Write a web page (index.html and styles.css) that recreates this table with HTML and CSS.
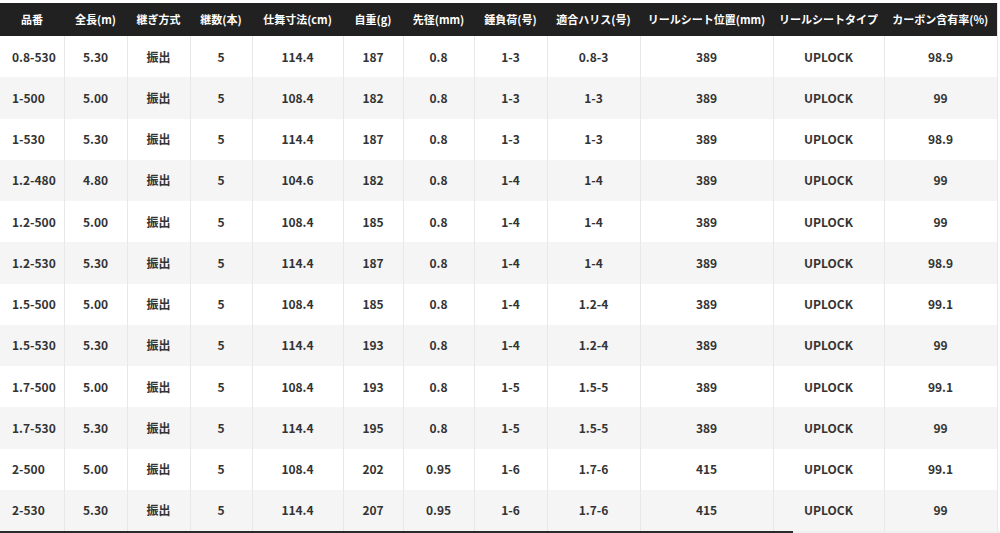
FILE: index.html
```html
<!DOCTYPE html>
<html lang="ja">
<head>
<meta charset="utf-8">
<link rel="stylesheet" href="styles.css">
</head>
<body>
<div class="scroller">
  <table class="spec">
    <colgroup>
      <col style="width:64px"><col style="width:63px"><col style="width:63px"><col style="width:62px">
      <col style="width:91px"><col style="width:60px"><col style="width:71px"><col style="width:73px">
      <col style="width:93px"><col style="width:133px"><col style="width:111px"><col style="width:113px">
      <col style="width:3px">
    </colgroup>
    <thead>
      <tr>
        <th>品番</th><th>全長(m)</th><th>継ぎ方式</th><th>継数(本)</th><th>仕舞寸法(cm)</th><th>自重(g)</th><th>先径(mm)</th><th>錘負荷(号)</th><th>適合ハリス(号)</th><th>リールシート位置(mm)</th><th>リールシートタイプ</th><th>カーボン含有率(%)</th><th class="edge"></th>
      </tr>
    </thead>
    <tbody>
      <tr><td class="l">0.8-530</td><td>5.30</td><td>振出</td><td>5</td><td>114.4</td><td>187</td><td>0.8</td><td>1-3</td><td>0.8-3</td><td>389</td><td>UPLOCK</td><td>98.9</td><td class="edge"></td></tr>
      <tr><td class="l">1-500</td><td>5.00</td><td>振出</td><td>5</td><td>108.4</td><td>182</td><td>0.8</td><td>1-3</td><td>1-3</td><td>389</td><td>UPLOCK</td><td>99</td><td class="edge"></td></tr>
      <tr><td class="l">1-530</td><td>5.30</td><td>振出</td><td>5</td><td>114.4</td><td>187</td><td>0.8</td><td>1-3</td><td>1-3</td><td>389</td><td>UPLOCK</td><td>98.9</td><td class="edge"></td></tr>
      <tr><td class="l">1.2-480</td><td>4.80</td><td>振出</td><td>5</td><td>104.6</td><td>182</td><td>0.8</td><td>1-4</td><td>1-4</td><td>389</td><td>UPLOCK</td><td>99</td><td class="edge"></td></tr>
      <tr><td class="l">1.2-500</td><td>5.00</td><td>振出</td><td>5</td><td>108.4</td><td>185</td><td>0.8</td><td>1-4</td><td>1-4</td><td>389</td><td>UPLOCK</td><td>99</td><td class="edge"></td></tr>
      <tr><td class="l">1.2-530</td><td>5.30</td><td>振出</td><td>5</td><td>114.4</td><td>187</td><td>0.8</td><td>1-4</td><td>1-4</td><td>389</td><td>UPLOCK</td><td>98.9</td><td class="edge"></td></tr>
      <tr><td class="l">1.5-500</td><td>5.00</td><td>振出</td><td>5</td><td>108.4</td><td>185</td><td>0.8</td><td>1-4</td><td>1.2-4</td><td>389</td><td>UPLOCK</td><td>99.1</td><td class="edge"></td></tr>
      <tr><td class="l">1.5-530</td><td>5.30</td><td>振出</td><td>5</td><td>114.4</td><td>193</td><td>0.8</td><td>1-4</td><td>1.2-4</td><td>389</td><td>UPLOCK</td><td>99</td><td class="edge"></td></tr>
      <tr><td class="l">1.7-500</td><td>5.00</td><td>振出</td><td>5</td><td>108.4</td><td>193</td><td>0.8</td><td>1-5</td><td>1.5-5</td><td>389</td><td>UPLOCK</td><td>99.1</td><td class="edge"></td></tr>
      <tr><td class="l">1.7-530</td><td>5.30</td><td>振出</td><td>5</td><td>114.4</td><td>195</td><td>0.8</td><td>1-5</td><td>1.5-5</td><td>389</td><td>UPLOCK</td><td>99</td><td class="edge"></td></tr>
      <tr><td class="l">2-500</td><td>5.00</td><td>振出</td><td>5</td><td>108.4</td><td>202</td><td>0.95</td><td>1-6</td><td>1.7-6</td><td>415</td><td>UPLOCK</td><td>99.1</td><td class="edge"></td></tr>
      <tr><td class="l">2-530</td><td>5.30</td><td>振出</td><td>5</td><td>114.4</td><td>207</td><td>0.95</td><td>1-6</td><td>1.7-6</td><td>415</td><td>UPLOCK</td><td>99</td><td class="edge"></td></tr>
    </tbody>
  </table>
  <div class="scrollbar"><div class="thumb"></div></div>
</div>
</body>
</html>
```

FILE: styles.css
```css
* { box-sizing: border-box; }
html, body { margin: 0; padding: 0; background: #fff; }
body {
  font-family: "Noto Sans CJK JP", "Noto Sans", sans-serif;
  color: #333;
  overflow: hidden;
}
.scroller {
  width: 1000px;
  height: 533px;
  padding-top: 3px;
  display: flex;
  flex-direction: column;
}
.spec {
  border-collapse: collapse;
  table-layout: fixed;
  width: 1000px;
}
.spec th {
  background: #212121;
  color: #fff;
  font-size: 11px;
  font-weight: 700;
  height: 33px;
  padding: 0;
  text-align: center;
  white-space: nowrap;
  line-height: 1;
}
.spec th.edge { background: #fff; border-left: 1px solid #e4e4e4; }
.spec td {
  height: 41.25px;
  padding: 0;
  font-size: 12px;
  font-weight: 700;
  text-align: center;
  border-right: 1px solid #e8e8e8;
  white-space: nowrap;
  line-height: 1;
}
.spec td.l { text-align: left; padding-left: 12px; }
.spec td.edge { border-right: none; background: #fff; }
.spec tbody tr:nth-child(even) td { background: #f5f5f5; }
.spec tbody tr:nth-child(even) td.edge { background: #fff; }
.scrollbar {
  margin-top: auto;
  height: 3px;
  background: #f0f0f0;
}
.thumb {
  width: 793px;
  height: 3px;
  background: #2b2b2b;
}
```
